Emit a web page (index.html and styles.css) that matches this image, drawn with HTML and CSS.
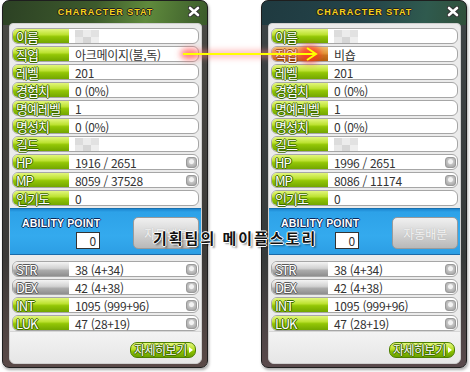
FILE: index.html
```html
<!DOCTYPE html>
<html lang="ko">

<head>
  <meta charset="UTF-8">
  <title>Character Stat</title>
  <link rel="stylesheet" href="styles.css">
</head>

<body>
  <div class="page">

    <!-- before -->
    <div class="window win-a">
      <div class="titlebar">
        <span></span>
        <span class="title">CHARACTER STAT</span>
        <svg class="close" width="12" height="11" viewBox="0 0 12 11">
          <path d="M2 2 L10 9 M10 2 L2 9" stroke="#333" stroke-width="4.5" stroke-linecap="round" />
          <path d="M2 2 L10 9 M10 2 L2 9" stroke="#fff" stroke-width="2.6" stroke-linecap="round" />
        </svg>
      </div>
      <div class="panel">
        <div class="rows">
          <div class="row"><span class="label">이름</span><span class="value"><span class="mosaic"></span></span></div>
          <div class="row"><span class="label">직업</span><span class="value">아크메이지(불,독)</span></div>
          <div class="row"><span class="label">레벨</span><span class="value">201</span></div>
          <div class="row"><span class="label">경험치</span><span class="value">0 (0%)</span></div>
          <div class="row"><span class="label">명예레벨</span><span class="value">1</span></div>
          <div class="row"><span class="label">명성치</span><span class="value">0 (0%)</span></div>
          <div class="row"><span class="label">길드</span><span class="value"><span class="mosaic"></span></span></div>
          <div class="row"><span class="label">HP</span><span class="value">1916 / 2651<i class="mini"></i></span></div>
          <div class="row"><span class="label">MP</span><span class="value">8059 / 37528<i class="mini"></i></span></div>
          <div class="row"><span class="label">인기도</span><span class="value">0</span></div>
        </div>
        <div class="ability">
          <div class="ap">
            <span class="ap-title">ABILITY POINT</span>
            <span class="ap-box">0</span>
          </div>
          <button class="auto">자동배분</button>
        </div>
        <div class="rows stats">
          <div class="row"><span class="label grey">STR</span><span class="value">38 (4+34)<i class="mini"></i></span></div>
          <div class="row"><span class="label grey">DEX</span><span class="value">42 (4+38)<i class="mini"></i></span></div>
          <div class="row"><span class="label">INT</span><span class="value">1095 (999+96)<i class="mini"></i></span></div>
          <div class="row"><span class="label">LUK</span><span class="value">47 (28+19)<i class="mini"></i></span></div>
        </div>
        <div class="footer">
          <button class="detail">자세히보기<span class="tri"></span></button>
        </div>
      </div>
    </div>

    <!-- after -->
    <div class="window win-b">
      <div class="titlebar">
        <span></span>
        <span class="title">CHARACTER STAT</span>
        <svg class="close" width="12" height="11" viewBox="0 0 12 11">
          <path d="M2 2 L10 9 M10 2 L2 9" stroke="#333" stroke-width="4.5" stroke-linecap="round" />
          <path d="M2 2 L10 9 M10 2 L2 9" stroke="#fff" stroke-width="2.6" stroke-linecap="round" />
        </svg>
      </div>
      <div class="panel">
        <div class="rows">
          <div class="row"><span class="label">이름</span><span class="value"><span class="mosaic"></span></span></div>
          <div class="row"><span class="label hl">직업</span><span class="value">비숍</span></div>
          <div class="row"><span class="label">레벨</span><span class="value">201</span></div>
          <div class="row"><span class="label">경험치</span><span class="value">0 (0%)</span></div>
          <div class="row"><span class="label">명예레벨</span><span class="value">1</span></div>
          <div class="row"><span class="label">명성치</span><span class="value">0 (0%)</span></div>
          <div class="row"><span class="label">길드</span><span class="value"><span class="mosaic"></span></span></div>
          <div class="row"><span class="label">HP</span><span class="value">1996 / 2651<i class="mini"></i></span></div>
          <div class="row"><span class="label">MP</span><span class="value">8086 / 11174<i class="mini"></i></span></div>
          <div class="row"><span class="label">인기도</span><span class="value">0</span></div>
        </div>
        <div class="ability">
          <div class="ap">
            <span class="ap-title">ABILITY POINT</span>
            <span class="ap-box">0</span>
          </div>
          <button class="auto">자동배분</button>
        </div>
        <div class="rows stats">
          <div class="row"><span class="label grey">STR</span><span class="value">38 (4+34)<i class="mini"></i></span></div>
          <div class="row"><span class="label grey">DEX</span><span class="value">42 (4+38)<i class="mini"></i></span></div>
          <div class="row"><span class="label">INT</span><span class="value">1095 (999+96)<i class="mini"></i></span></div>
          <div class="row"><span class="label">LUK</span><span class="value">47 (28+19)<i class="mini"></i></span></div>
        </div>
        <div class="footer">
          <button class="detail">자세히보기<span class="tri"></span></button>
        </div>
      </div>
    </div>

    <!-- arrow drawn over both windows -->
    <svg class="arrow" width="170" height="40" viewBox="0 0 170 40">
      <defs>
        <filter id="glow" x="-20%" y="-100%" width="140%" height="300%">
          <feGaussianBlur stdDeviation="3" />
        </filter>
      </defs>
      <g filter="url(#glow)">
        <line x1="12" y1="20" x2="140" y2="20" stroke="#ff8080" stroke-width="7" opacity="0.55" />
        <ellipse cx="20" cy="20" rx="10" ry="6" fill="#ff6060" opacity="0.7" />
        <ellipse cx="140" cy="20" rx="11" ry="9" fill="#ff3020" opacity="0.75" />
      </g>
      <line x1="13" y1="20" x2="146" y2="20" stroke="#ffff00" stroke-width="2" />
      <path d="M137 14 L146 20 L137 26" fill="none" stroke="#ffff00" stroke-width="2" />
    </svg>

    <div class="watermark">기획팀의 메이플스토리</div>
  </div>
</body>

</html>
```

FILE: styles.css
```css
body {
  margin: 0;
  padding: 0;
  background-color: #fff;
  font-family: "Noto Sans CJK KR", "Noto Sans", sans-serif;
}

.page {
  position: relative;
  width: 470px;
  height: 372px;
  display: flex;
  gap: 53px;
  padding-left: 2px;
  box-sizing: border-box;
}

.window {
  width: 206px;
  height: 368px;
  box-sizing: border-box;
  padding: 0 5px 3px 6px;
  display: flex;
  flex-direction: column;
  border-radius: 7px;
  border: 1px solid #1e1e1e;
  box-shadow: 1px 2px 3px rgba(0, 0, 0, 0.35);
}

.win-a {
  background: linear-gradient(100deg, #2c4124 0%, #3d5a2c 45%, #5f8a3c 70%, #3a5a2a 100%) top / 100% 24px no-repeat,
    linear-gradient(#4a4a46, #3c3a38 70%, #5a4a48);
}

.win-b {
  background: linear-gradient(100deg, #1f3a40 0%, #24444a 50%, #2f5a4e 80%, #30503a 100%) top / 100% 24px no-repeat,
    linear-gradient(#3e4446, #363a3a 70%, #5a4a4c);
}

.titlebar {
  height: 22px;
  display: grid;
  grid-template-columns: 1fr auto 1fr;
  align-items: center;
}

.title {
  font-family: "Liberation Sans", sans-serif;
  font-weight: bold;
  font-size: 9px;
  letter-spacing: 1px;
  color: #f6d21a;
  text-shadow: 1px 0 #222, -1px 0 #222, 0 1px #222, 0 -1px #222;
}

.close {
  justify-self: end;
  margin-right: 2px;
  margin-top: -1px;
}

.panel {
  flex: 1;
  display: flex;
  flex-direction: column;
  background-color: #ebebeb;
  border: 1px solid #cfcfcf;
  border-radius: 4px 4px 6px 6px;
}

.rows {
  display: flex;
  flex-direction: column;
  gap: 2px;
  padding: 4px 2px 0 2px;
}

.stats {
  padding-top: 6px;
}

.row {
  height: 16px;
  box-sizing: border-box;
  display: flex;
  background-color: #fff;
  border: 1px solid #a6a6a6;
  border-radius: 6px;
}

.label {
  width: 56px;
  height: 14px;
  flex-shrink: 0;
  box-sizing: border-box;
  display: flex;
  align-items: center;
  padding-left: 3px;
  font-size: 13px;
  letter-spacing: -1px;
  color: #fff;
  border-radius: 5px 0 0 5px;
  background: linear-gradient(#e2f67c 0%, #bde232 40%, #93c606 55%, #72a600 100%);
  text-shadow: 1px 0 #3d6a00, -1px 0 #3d6a00, 0 1px #3d6a00, 0 -1px #3d6a00;
}

.label.grey {
  background: linear-gradient(#f4f4f4 0%, #d2d2d2 45%, #ababab 60%, #8e8e8e 100%);
  text-shadow: 1px 0 #5a5a5a, -1px 0 #5a5a5a, 0 1px #5a5a5a, 0 -1px #5a5a5a;
}

.label.hl {
  background: linear-gradient(#f2c070 0%, #e09a3a 45%, #c87420 60%, #b06010 100%);
  text-shadow: 1px 0 #7a3a00, -1px 0 #7a3a00, 0 1px #7a3a00, 0 -1px #7a3a00;
}

.value {
  flex: 1;
  display: flex;
  align-items: center;
  padding-left: 6px;
  font-size: 12px;
  letter-spacing: -0.3px;
  color: #333;
  white-space: nowrap;
}

.mosaic {
  width: 24px;
  height: 13px;
  background:
    linear-gradient(90deg, #dcdcdc 0 8px, #ececec 8px 16px, #e2e2e2 16px) top / 100% 7px no-repeat,
    linear-gradient(90deg, #e8e8e8 0 8px, #d6d6d6 8px 16px, #eeeeee 16px);
}

.mini {
  margin-left: auto;
  margin-right: 1px;
  width: 9px;
  height: 9px;
  border-radius: 3px;
  border: 1px solid #9a9a9a;
  background: radial-gradient(circle at 50% 40%, #f2f2f2 0 2px, #c4c4c4 3px, #9c9c9c 100%);
}

.ability {
  margin-top: 2px;
  height: 45px;
  display: flex;
  align-items: flex-start;
  background: linear-gradient(#1d86d0 0, #2da2e8 3px, #34aaee 60%, #2c9ee4 100%);
  border-top: 1px solid #1670b0;
  border-bottom: 1px solid #1a6aa8;
}

.ap {
  display: flex;
  flex-direction: column;
  align-items: flex-end;
  padding: 9px 0 0 12px;
  gap: 3px;
}

.ap-title {
  font-family: "Liberation Sans", sans-serif;
  font-weight: bold;
  font-size: 10.5px;
  line-height: 11px;
  letter-spacing: 0.2px;
  color: #fff;
  text-shadow: 1px 0 #0c2a5a, -1px 0 #0c2a5a, 0 1px #0c2a5a, 0 -1px #0c2a5a;
}

.ap-box {
  width: 24px;
  height: 17px;
  box-sizing: border-box;
  background-color: #fff;
  border: 1px solid #333;
  font-size: 12px;
  line-height: 15px;
  text-align: right;
  padding-right: 3px;
  color: #333;
}

.auto {
  margin: 8px 0 0 33px;
  width: 66px;
  height: 32px;
  padding: 0;
  font-family: "Noto Sans CJK KR", sans-serif;
  font-size: 12px;
  color: #f4f4f4;
  border: 1px solid #9a9a9a;
  border-radius: 5px;
  background: linear-gradient(#f0f0f0 0%, #d8d8d8 45%, #b8b8b8 100%);
  text-shadow: 0 0 1px #aaa;
}

.footer {
  margin-top: auto;
  height: 32px;
  display: flex;
  justify-content: flex-end;
  align-items: flex-start;
  padding: 10px 5px 0 0;
  box-sizing: border-box;
  background: linear-gradient(#f3f3f3, #e6e6e6);
  border-top: 1px solid #d6d6d6;
  border-radius: 0 0 6px 6px;
}

.detail {
  width: 66px;
  height: 16px;
  padding: 0 0 0 3px;
  display: flex;
  align-items: center;
  gap: 2px;
  font-family: "Noto Sans CJK KR", sans-serif;
  font-size: 12px;
  line-height: 14px;
  letter-spacing: -0.5px;
  color: #fff;
  border: 1px solid #4e8000;
  border-radius: 7px;
  background: linear-gradient(#e4f77e 0%, #b8e02a 45%, #8cc200 60%, #6aa000 100%);
  text-shadow: 1px 0 #3a6600, -1px 0 #3a6600, 0 1px #3a6600, 0 -1px #3a6600;
}

.tri {
  width: 0;
  height: 0;
  border-top: 3px solid transparent;
  border-bottom: 3px solid transparent;
  border-left: 4px solid #fff;
}

.arrow {
  position: absolute;
  left: 170px;
  top: 34px;
}

.watermark {
  position: absolute;
  left: 153px;
  top: 227px;
  font-size: 15px;
  font-weight: bold;
  letter-spacing: 2px;
  color: #111;
  text-shadow: 1px 0 #fff, -1px 0 #fff, 0 1px #fff, 0 -1px #fff, 2px 2px 2px rgba(0, 0, 0, 0.45);
}
```
